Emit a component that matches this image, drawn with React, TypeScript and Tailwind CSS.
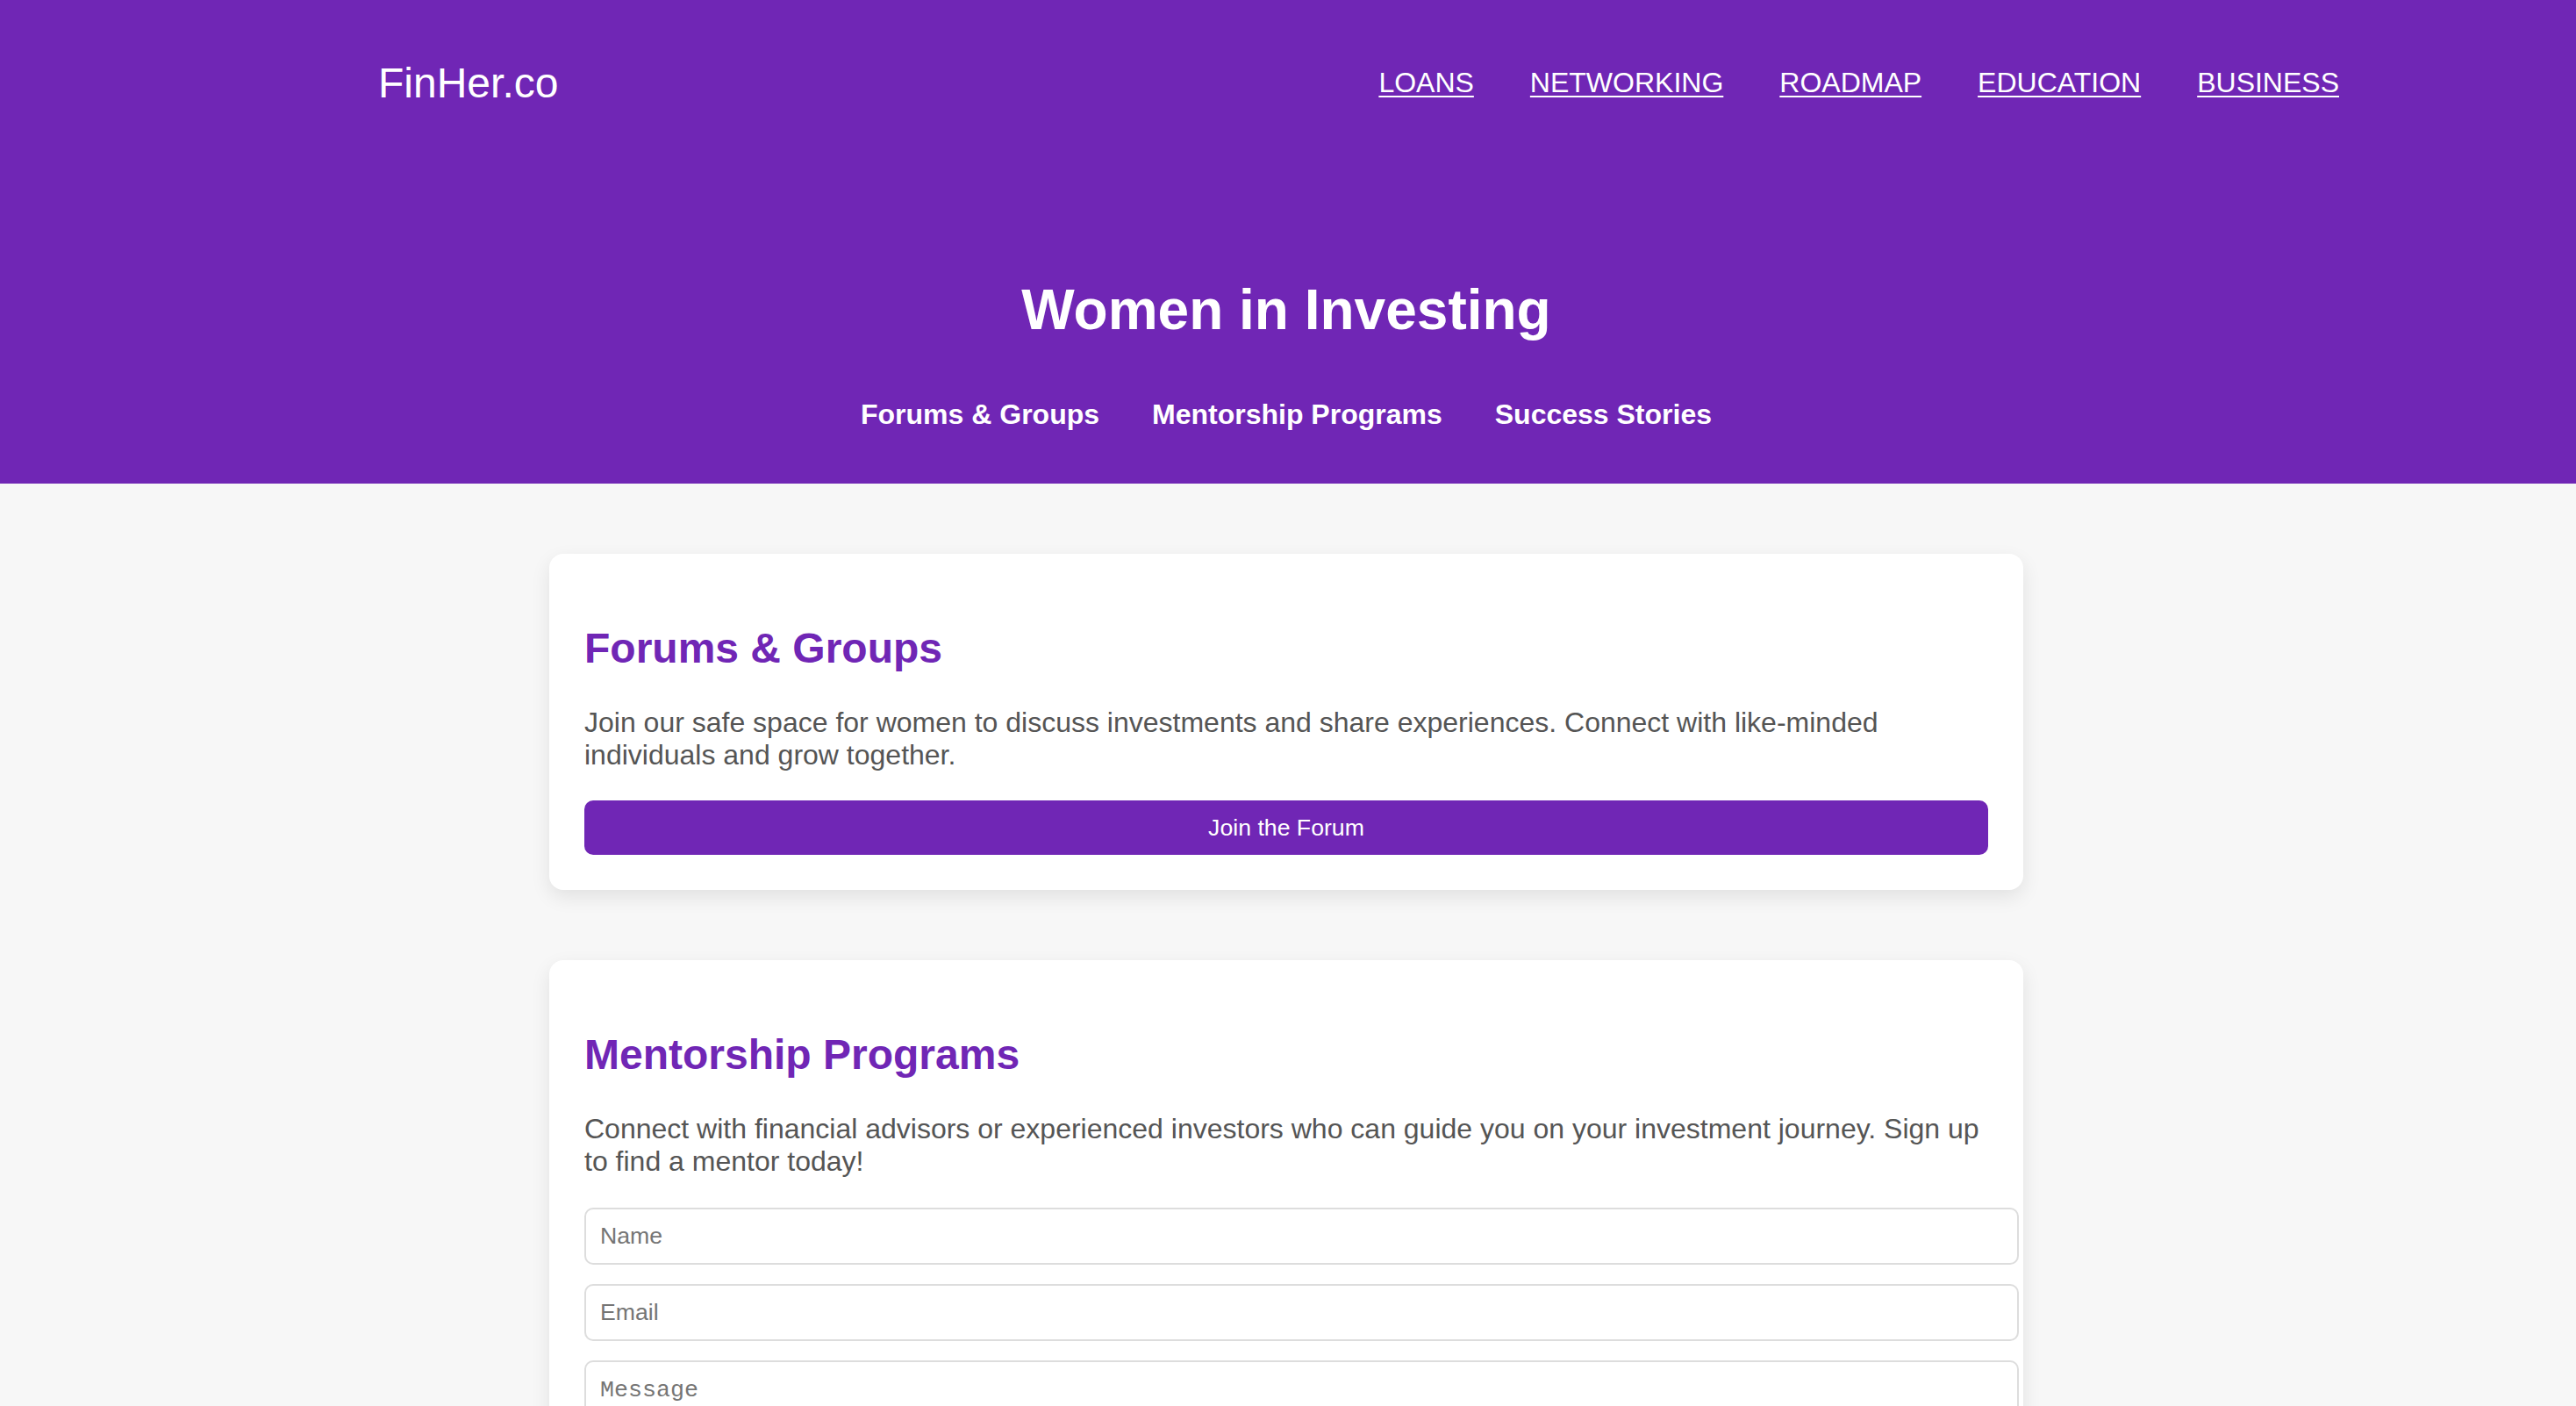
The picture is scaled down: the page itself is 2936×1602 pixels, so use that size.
import React, { useState } from 'react';

const navLinks = ['LOANS', 'NETWORKING', 'ROADMAP', 'EDUCATION', 'BUSINESS'];
const sectionLinks = ['Forums & Groups', 'Mentorship Programs', 'Success Stories'];

const inputClass =
  "block w-[1635px] h-[65px] px-[16px] bg-white border-2 border-[#dddddd] rounded-[10px] text-[26.67px] text-[#333] placeholder:text-[#757575] outline-none font-['Liberation_Sans',Arial,sans-serif]";

function Card({ title, children }: { title: string; children: React.ReactNode }) {
  return (
    <section className="w-[1680px] mx-auto bg-white rounded-[16px] px-[40px] pt-[40px] pb-[40px] shadow-[0_8px_22px_rgba(0,0,0,0.09)]">
      <h2 className="mt-[40px] text-[48px] leading-[55px] font-bold text-[#7026b5]">{title}</h2>
      {children}
    </section>
  );
}

export default function App() {
  const [form, setForm] = useState({ name: '', email: '', message: '' });

  return (
    <div className="min-h-screen bg-[#f7f7f7] font-['Liberation_Sans',Arial,sans-serif]">
      <header className="bg-[#7026b5] text-white pb-[60px] pr-[4px]">
        <div className="w-[2400px] mx-auto h-[188px] flex items-center justify-between">
          <a href="#" className="ml-[165px] text-[48px] leading-[55px] text-white">
            FinHer.co
          </a>
          <nav className="flex items-center gap-[64px]">
            {navLinks.map((link) => (
              <a
                key={link}
                href="#"
                className="text-[32px] leading-[37px] text-white underline decoration-2 underline-offset-[4px]"
              >
                {link}
              </a>
            ))}
          </nav>
        </div>
        <h1 className="mt-[128px] text-center text-[64px] leading-[74px] font-bold">Women in Investing</h1>
        <div className="mt-[64px] flex justify-center gap-[60px]">
          {sectionLinks.map((link) => (
            <a key={link} href="#" className="text-[32px] leading-[37px] font-bold text-white">
              {link}
            </a>
          ))}
        </div>
      </header>

      <main className="pt-[80px] pb-[80px] pr-[4px] flex flex-col gap-[80px]">
        <Card title="Forums & Groups">
          <p className="mt-[39px] text-[32px] leading-[37px] text-[#555]">
            Join our safe space for women to discuss investments and share experiences. Connect with like-minded
            individuals and grow together.
          </p>
          <button className="mt-[33px] w-full h-[62px] bg-[#7026b5] text-white text-[26.67px] rounded-[10px]">
            Join the Forum
          </button>
        </Card>

        <Card title="Mentorship Programs">
          <p className="mt-[39px] text-[32px] leading-[37px] text-[#555]">
            Connect with financial advisors or experienced investors who can guide you on your investment journey.
            Sign up to find a mentor today!
          </p>
          <form className="mt-[34px] flex flex-col gap-[22px]" onSubmit={(e) => e.preventDefault()}>
            <input
              type="text"
              placeholder="Name"
              value={form.name}
              onChange={(e) => setForm({ ...form, name: e.target.value })}
              className={inputClass}
            />
            <input
              type="email"
              placeholder="Email"
              value={form.email}
              onChange={(e) => setForm({ ...form, email: e.target.value })}
              className={inputClass}
            />
            <textarea
              placeholder="Message"
              rows={4}
              value={form.message}
              onChange={(e) => setForm({ ...form, message: e.target.value })}
              className="block w-[1635px] h-[160px] px-[16px] pt-[12px] bg-white border-2 border-[#dddddd] rounded-[10px] text-[26.67px] text-[#333] placeholder:text-[#757575] outline-none resize-y font-['Liberation_Mono',monospace]"
            />
            <button className="w-full h-[62px] bg-[#7026b5] text-white text-[26.67px] rounded-[10px]">
              Find a Mentor
            </button>
          </form>
        </Card>
      </main>
    </div>
  );
}
